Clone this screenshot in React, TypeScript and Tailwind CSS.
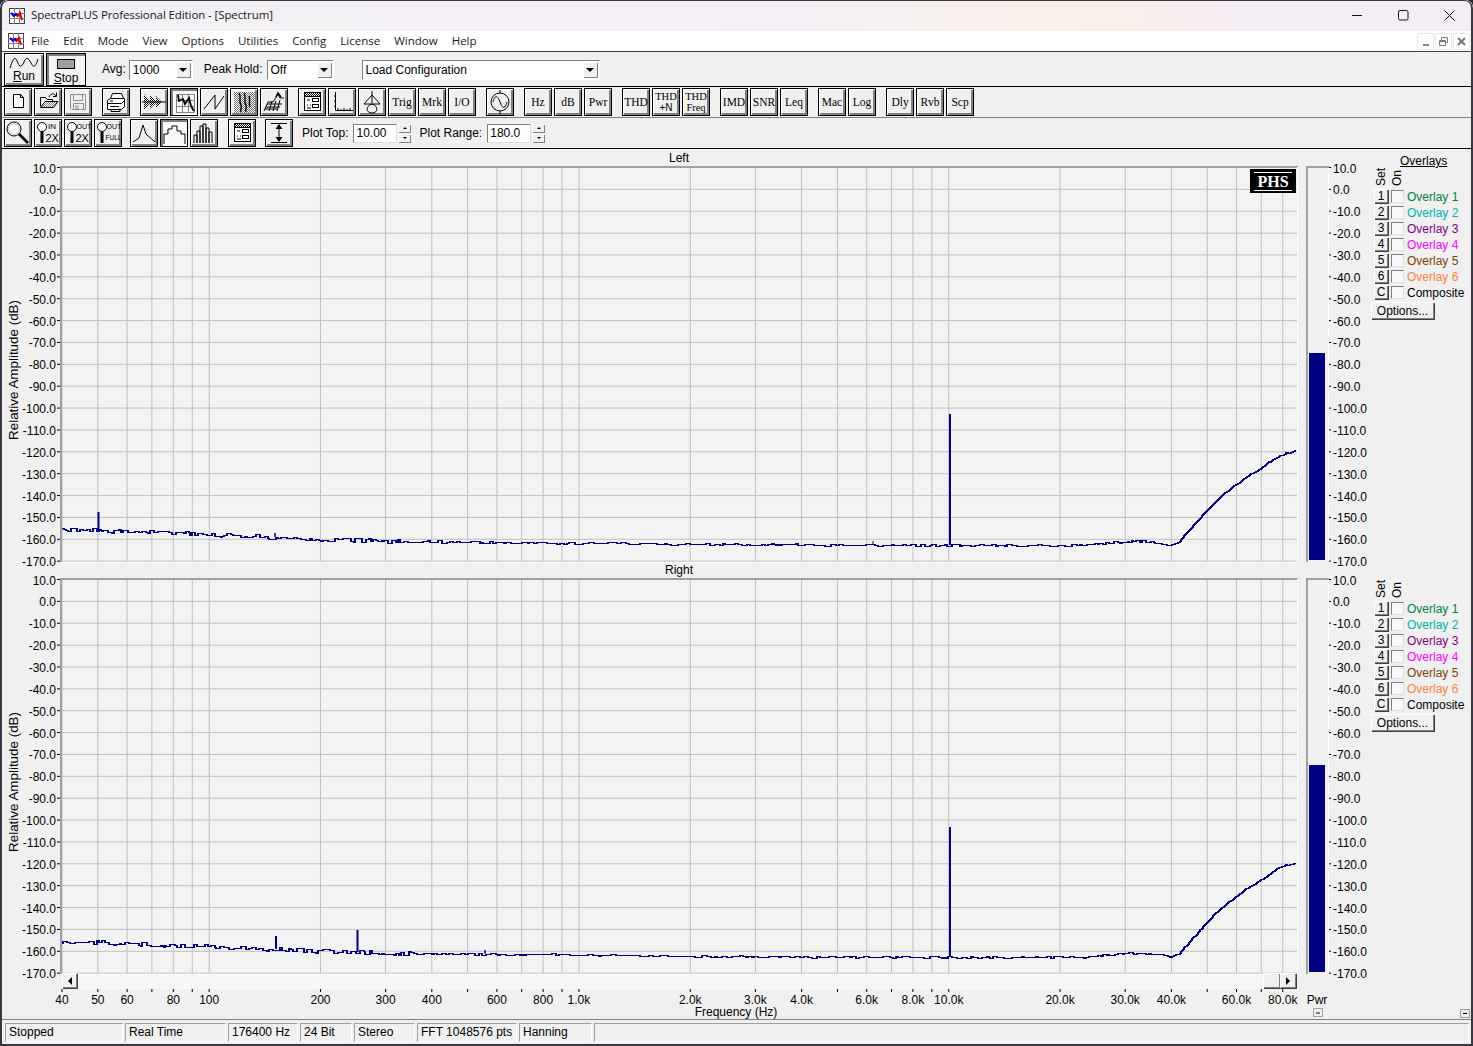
import type { ReactNode } from "react";

const FREQ_GRID = [
  40, 50, 60, 70, 80, 90, 100, 200, 300, 400, 500, 600, 700, 800, 900, 1000, 2000, 3000, 4000, 5000, 6000, 7000, 8000,
  9000, 10000, 20000, 30000, 40000, 50000, 60000, 70000, 80000,
];
const FREQ_LABELS: [number, string][] = [
  [40, "40"], [50, "50"], [60, "60"], [80, "80"], [100, "100"], [200, "200"], [300, "300"], [400, "400"],
  [600, "600"], [800, "800"], [1000, "1.0k"], [2000, "2.0k"], [3000, "3.0k"], [4000, "4.0k"], [6000, "6.0k"],
  [8000, "8.0k"], [10000, "10.0k"], [20000, "20.0k"], [30000, "30.0k"], [40000, "40.0k"], [60000, "60.0k"],
  [80000, "80.0k"],
];
const DB_LEVELS = Array.from({ length: 19 }, (_, i) => 10 - i * 10);

const freqX = (f: number) => 62 + 369.8 * Math.log10(f / 40);
const dbY = (db: number) => 167.5 + (10 - db) * 2.187;
const dbLabel = (db: number) => `${db}.0`;

// y of the noise floor (px, left plot coordinates) along the x axis
const FLOOR: [number, number][] = [
  [62, 529.5], [98, 530], [209, 534], [320, 539], [400, 541], [600, 543], [800, 544.5], [1000, 545], [1080, 545],
  [1100, 543.5], [1133, 540.5], [1150, 541.5], [1172, 544.5], [1180, 541.7], [1190, 530], [1200, 519], [1210, 508],
  [1220, 498], [1233, 487], [1247, 477], [1263, 467], [1277, 457], [1287, 453], [1296, 451],
];

function floorAt(x: number) {
  for (let i = 1; i < FLOOR.length; i++) {
    if (x <= FLOOR[i][0]) {
      const [x0, y0] = FLOOR[i - 1];
      const [x1, y1] = FLOOR[i];
      return y0 + ((y1 - y0) * (x - x0)) / (x1 - x0);
    }
  }
  return 451;
}

type Spike = { x: number; top: number; w: number };

function buildTrace(seed: number) {
  let s = seed;
  const rnd = () => {
    s = (s * 1664525 + 1013904223) % 4294967296;
    return s / 4294967296;
  };
  let d = "";
  let held = 0;
  let noise = 0;
  for (let x = 62; x <= 1296; x++) {
    if (held-- <= 0) {
      const amp = x < 420 ? 4.2 : x < 1172 ? 2.2 : 1.2;
      noise = (rnd() - 0.5) * amp;
      held = Math.floor(rnd() * 4) + 1;
    }
    const y = Math.round(floorAt(x) + noise) + 0.5;
    d += x === 62 ? `M${x} ${y}` : `V${y}H${x}`;
  }
  return d;
}

const LEFT_TRACE = buildTrace(11);
const RIGHT_TRACE = buildTrace(4242);
const LEFT_SPIKES: Spike[] = [
  { x: 98.5, top: 512, w: 2 },
  { x: 275, top: 533, w: 1.5 },
  { x: 873, top: 541, w: 1 },
  { x: 950, top: 414, w: 2 },
];
const RIGHT_SPIKES: Spike[] = [
  { x: 276, top: 524, w: 2 },
  { x: 357.5, top: 518, w: 2 },
  { x: 485, top: 538, w: 1.5 },
  { x: 950, top: 415, w: 2 },
];

function Plot({ trace, spikes, logo }: { trace: string; spikes: Spike[]; logo?: boolean }) {
  return (
    <svg width={1370} height={396} viewBox="0 166 1370 396" className="block overflow-visible">
      <rect x={62} y={168} width={1234} height={393} fill="#f3f3f3" />
      {FREQ_GRID.map((f) => (
        <line key={f} x1={freqX(f)} x2={freqX(f)} y1={168} y2={561} stroke="#c0c0c0" />
      ))}
      {DB_LEVELS.map((db) => (
        <g key={db}>
          <line x1={62} x2={1297} y1={dbY(db)} y2={dbY(db)} stroke="#c0c0c0" />
          <line x1={57} x2={61} y1={dbY(db)} y2={dbY(db)} stroke="#000" />
          <line x1={1329} x2={1331} y1={dbY(db)} y2={dbY(db)} stroke="#000" />
          <text x={56} y={dbY(db) + 5} textAnchor="end" fontSize={12}>
            {dbLabel(db)}
          </text>
          <text x={1333} y={dbY(db) + 5} fontSize={12}>
            {dbLabel(db)}
          </text>
        </g>
      ))}
      {/* sunken frame */}
      <path d="M61 562V167H1298" fill="none" stroke="#a0a0a0" strokeWidth={2} />
      <path d="M1297.5 167V562.5H62" fill="none" stroke="#fff" />
      <text transform="translate(18 370) rotate(-90)" textAnchor="middle" fontSize={13.4}>
        Relative Amplitude (dB)
      </text>
      {spikes.map((sp) => (
        <line key={sp.x} x1={sp.x} x2={sp.x} y1={sp.top} y2={floorAt(sp.x)} stroke="#000080" strokeWidth={sp.w} />
      ))}
      <path d={trace} fill="none" stroke="#000080" strokeWidth={1.6} shapeRendering="crispEdges" />
      {logo && (
        <g>
          <rect x={1250} y={169} width={46} height={24} fill="#000" />
          <line x1={1254} x2={1292} y1={172.5} y2={172.5} stroke="#fff" />
          <line x1={1254} x2={1292} y1={190.5} y2={190.5} stroke="#fff" />
          <text x={1273} y={187} textAnchor="middle" fontSize={16} fontWeight={700} fill="#fff" className="font-['Liberation_Serif']">
            PHS
          </text>
        </g>
      )}
      {/* level meter */}
      <rect x={1307} y={167} width={21} height={395} fill="#f0f0f0" />
      <path d="M1307 562V167H1329" fill="none" stroke="#a0a0a0" strokeWidth={2} />
      <path d="M1328.5 168V562" fill="none" stroke="#fff" />
      <rect x={1309} y={353} width={16} height={207} fill="#000080" />
    </svg>
  );
}

// stroke="none" here: pattern content inherits the icon svg's black stroke otherwise
function Dither({ id, dark = "#000" }: { id: string; dark?: string }) {
  return (
    <pattern id={id} width={2} height={2} patternUnits="userSpaceOnUse" stroke="none">
      <rect width={2} height={2} fill="#fff" />
      <rect width={1} height={1} fill={dark} />
      <rect x={1} y={1} width={1} height={1} fill={dark} />
    </pattern>
  );
}

function AppIcon() {
  return (
    <svg width={16} height={16} viewBox="0 0 16 16" className="shrink-0">
      <rect x={0.5} y={0.5} width={15} height={15} fill="#fff" stroke="#404040" />
      <path d="M0 5.5H16M0 10.5H16M5.5 0V16M10.5 0V16" stroke="#808080" />
      <path d="M2 5L5 8L7 6L9 8" fill="none" stroke="#0000e0" strokeWidth={2} />
      <path d="M8 9L11 5L13 12" fill="none" stroke="#e00000" strokeWidth={2} />
    </svg>
  );
}

type BtnProps = { children: ReactNode; pressed?: boolean; className?: string };

function Btn({ children, pressed, className = "" }: BtnProps) {
  const look = pressed
    ? "bg-[#f8f8f8] shadow-[inset_2px_2px_0_#808080]"
    : "bg-[#f0f0f0] shadow-[inset_1px_1px_0_#fff,inset_-2px_-2px_0_#808080]";
  return (
    <div className={`flex h-[28px] w-[28px] shrink-0 items-center justify-center border border-black ${look} ${className}`}>
      {children}
    </div>
  );
}

function Ico({ children, pressed }: { children: ReactNode; pressed?: boolean }) {
  return (
    <Btn pressed={pressed}>
      <svg width={26} height={26} viewBox="0 0 26 26" fill="none" stroke="#000">
        {children}
      </svg>
    </Btn>
  );
}

function TextBtn({ label, sub }: { label: string; sub?: string }) {
  if (sub) {
    return (
      <Btn>
        <div className="flex flex-col items-center font-['Liberation_Serif'] text-[10.5px] leading-[11px] text-black">
          <span>{label}</span>
          <span className={sub === "+N" ? "font-['Liberation_Sans'] text-[10px]" : ""}>{sub}</span>
        </div>
      </Btn>
    );
  }
  return (
    <Btn>
      <span className="whitespace-nowrap pt-[1px] font-['Liberation_Serif'] text-[11.5px] text-black">{label}</span>
    </Btn>
  );
}

function ListIcon({ id }: { id: string }) {
  return (
    <Ico>
      <Dither id={id} />
      <rect x={5.5} y={3.5} width={16} height={18} fill="#fff" />
      <rect x={6} y={4} width={15} height={3} fill={`url(#${id})`} stroke="none" />
      <path d="M5.5 7.5H21.5" />
      <rect x={13.5} y={9.5} width={6} height={3} />
      <rect x={13.5} y={15.5} width={6} height={3} />
      <path d="M8 11H11M8 16H9M11 16H12M8 19H12" />
    </Ico>
  );
}

function ZoomIcon({ top, bottom }: { top: string; bottom: string }) {
  return (
    <Ico>
      <circle cx={7} cy={7} r={4.5} fill="#fff" />
      <path d="M7 11.5V23" strokeWidth={3} />
      <text x={top === "IN" ? 13 : 11.5} y={9} fontSize={top === "IN" ? 8 : 7} stroke="none" fill="#000">
        {top}
      </text>
      <text x={10.5} y={bottom === "FULL" ? 20 : 22} fontSize={bottom === "FULL" ? 6.5 : 11} stroke="none" fill="#000">
        {bottom}
      </text>
    </Ico>
  );
}

function ToolbarRow2() {
  return (
    <div className="flex h-[31px] items-start gap-[2px] border-b border-[#808080] pl-[4px] pt-[1px]">
      <Ico>
        <path d="M8.5 5.5H15.5L18.5 8.5V18.5H8.5Z" fill="#fff" />
        <path d="M15.5 5.5V8.5H18.5" />
      </Ico>
      <Ico>
        <Dither id="df" dark="#808080" />
        <path d="M5.5 17.5V8.5H10.5L12 10.5H17.5V12.5" fill="#fff" />
        <path d="M5.5 18.5L10 12.5H23L18.5 18.5Z" fill="url(#df)" />
        <path d="M14 8C16 4 19 4 21 7M21.5 3.5V7.5H18" />
      </Ico>
      <Ico>
        <g stroke="#909090">
          <path d="M5.5 5.5H20.5V20.5H7L5.5 19Z" />
          <path d="M8.5 5.5V11.5H17.5V5.5M8.5 20.5V14.5H18.5V20.5M11 16V20H13V16" />
        </g>
      </Ico>
      <div className="ml-[8px]">
        <Ico>
          <path d="M9.5 4.5H18.5L20.5 9.5H7.5Z" fill="#fff" />
          <path d="M4.5 11.5L7.5 9.5H21.5V17.5L18.5 20.5H4.5Z" fill="#fff" />
          <path d="M4.5 14.5H18.5L21.5 11.5M7 17.5H16M7 12H10" />
          <path d="M8 20.5V22.5H17V20.5" />
        </Ico>
      </div>
      <div className="ml-[8px] flex gap-[2px]">
        <Ico>
          <Dither id="ds" />
          <path d="M3 5V21L10 13ZM9 6V20L16 13ZM15 7V19L21 13Z" fill="url(#ds)" stroke="none" />
          <path d="M1 13H25" />
        </Ico>
        <Ico pressed>
          <path d="M5.5 5.5H23.5V23.5H5.5ZM11.5 5.5V23.5M17.5 5.5V23.5M5.5 11.5H23.5M5.5 17.5H23.5" stroke="#808080" />
          <path d="M7 6L8 12L12 10L14 15L18 9L20 17L23 22" strokeWidth={1.8} />
        </Ico>
        <Ico>
          <path d="M3 20L14 6V20L23 7" />
        </Ico>
        <Ico>
          <Dither id="dg" dark="#707070" />
          <rect x={3} y={3} width={21} height={21} fill="url(#dg)" stroke="none" />
          <path d="M8 4C11 8 7 12 10 16C11 18 9 21 10 23M13 4C16 8 12 12 15 16C16 18 14 21 15 23M18 7C20 11 17 14 19 18" strokeWidth={1.4} />
        </Ico>
        <Ico>
          <path d="M3 22L7 13H12L14 10L17 5L19 9H23M5 18H19M6 15H21M4 20H17M8 22L11 12M12 22L15 12M16 22L19 11" />
          <path d="M15 8L17 4L20 8" strokeWidth={1.6} />
        </Ico>
      </div>
      <div className="ml-[8px] flex gap-[2px]">
        <ListIcon id="dl1" />
        <Ico>
          <path d="M6.5 3V21.5H24M9 19V21M12 20V21M15 19V21M18 20V21M21 19V21M5 7H6M5 12H6M5 17H6" />
        </Ico>
        <Ico>
          <path d="M13 2V14M13 6L5 15H21L13 6" />
          <path d="M13 15C6 17 7 24 13 24C19 24 20 17 13 15Z" />
        </Ico>
        <TextBtn label="Trig" />
        <TextBtn label="Mrk" />
        <TextBtn label="I/O" />
      </div>
      <div className="ml-[8px]">
        <Ico>
          <circle cx={13} cy={13} r={9} />
          <path d="M13 1V4M13 22V25" />
          <path d="M6 13C8 5 11 7 13 13C15 19 18 21 20 13" />
        </Ico>
      </div>
      <div className="ml-[8px] flex gap-[2px]">
        <TextBtn label="Hz" />
        <TextBtn label="dB" />
        <TextBtn label="Pwr" />
      </div>
      <div className="ml-[8px] flex gap-[2px]">
        <TextBtn label="THD" />
        <TextBtn label="THD" sub="+N" />
        <TextBtn label="THD" sub="Freq" />
      </div>
      <div className="ml-[8px] flex gap-[2px]">
        <TextBtn label="IMD" />
        <TextBtn label="SNR" />
        <TextBtn label="Leq" />
      </div>
      <div className="ml-[8px] flex gap-[2px]">
        <TextBtn label="Mac" />
        <TextBtn label="Log" />
      </div>
      <div className="ml-[8px] flex gap-[2px]">
        <TextBtn label="Dly" />
        <TextBtn label="Rvb" />
        <TextBtn label="Scp" />
      </div>
    </div>
  );
}

function NumberField({ value }: { value: string }) {
  return (
    <div className="flex items-center gap-[1px]">
      <div className="flex h-[19px] w-[44px] items-center border border-[#808080] border-b-[#e0e0e0] border-r-[#e0e0e0] bg-white pl-[2px]">
        {value}
      </div>
      <div className="flex h-[19px] w-[13px] flex-col gap-[1px]">
        <div className="flex h-[9px] items-center justify-center bg-[#f0f0f0] shadow-[inset_1px_1px_0_#fff,inset_-1px_-1px_0_#808080]">
          <div className="h-0 w-0 border-x-[2px] border-b-[2px] border-x-transparent border-b-black" />
        </div>
        <div className="flex h-[9px] items-center justify-center bg-[#f0f0f0] shadow-[inset_1px_1px_0_#fff,inset_-1px_-1px_0_#808080]">
          <div className="h-0 w-0 border-x-[2px] border-t-[2px] border-x-transparent border-t-black" />
        </div>
      </div>
    </div>
  );
}

function ToolbarRow3() {
  return (
    <div className="flex h-[31px] items-start border-b border-black pl-[4px] pt-[1px]">
      <div className="flex gap-[2px]">
        <Ico>
          <circle cx={9} cy={9} r={7} fill="#fff" />
          <circle cx={9} cy={9} r={5.2} stroke="#c0c0c0" />
          <path d="M14 14L23 23" strokeWidth={2.6} />
        </Ico>
        <ZoomIcon top="IN" bottom="2X" />
        <ZoomIcon top="OUT" bottom="2X" />
        <ZoomIcon top="OUT" bottom="FULL" />
      </div>
      <div className="ml-[8px] flex gap-[2px]">
        <Ico>
          <path d="M2 22L8 18L12 5L15 14L24 22" />
          <path d="M1 23H25" stroke="#fff" />
        </Ico>
        <Ico pressed>
          <path d="M3 24V14H7V9H11V6H16V11H20V14H24V24" />
        </Ico>
        <Ico>
          <path d="M3 23V15H6V23M6 23V11H9V23M9 23V6H12V23M12 23V4H15V23M15 23V8H18V23M18 23V12H21V23" />
        </Ico>
      </div>
      <div className="ml-[10px]">
        <ListIcon id="dl2" />
      </div>
      <div className="ml-[9px]">
        <Ico>
          <path d="M5 3.5H21M5 22.5H21M13 5V21" />
          <path d="M13 4L9.5 9H16.5ZM13 22L9.5 17H16.5Z" fill="#000" stroke="none" />
        </Ico>
      </div>
      <div className="flex h-[28px] items-center text-[12px]">
        <span className="ml-[9px] mr-[5px]">Plot Top:</span>
        <NumberField value="10.00" />
        <span className="ml-[8px] mr-[5px]">Plot Range:</span>
        <NumberField value="180.0" />
      </div>
    </div>
  );
}

function Combo({ text, width }: { text: string; width: string }) {
  return (
    <div className={`mt-[2px] flex h-[20px] items-center justify-between border border-[#808080] border-b-white border-r-white bg-white pl-[3px] ${width}`}>
      <span>{text}</span>
      <div className="mr-[1px] flex h-[16px] w-[15px] items-center justify-center bg-[#f0f0f0] shadow-[inset_1px_1px_0_#fff,inset_-1px_-1px_0_#808080]">
        <div className="h-0 w-0 border-x-[4px] border-t-[4px] border-x-transparent border-t-black" />
      </div>
    </div>
  );
}

function ToolbarRow1() {
  return (
    <div className="flex h-[36px] items-center border-y border-y-[#404040] border-b-black pl-[4px] text-[12px]">
      <div className="flex h-[33px] w-[40px] flex-col items-center border border-black bg-[#f0f0f0] shadow-[inset_1px_1px_0_#fff,inset_-2px_-2px_0_#808080]">
        <svg width={32} height={16} viewBox="0 0 32 16" fill="none" stroke="#000" className="mt-[1px]">
          <path d="M2 13C5 3 7 1 9 6C11 11 13 14 16 7C18 2 20 2 23 8C25 12 27 14 30 4" />
        </svg>
        <span className="mt-[-1px] leading-[13px]">
          <span className="underline">R</span>un
        </span>
      </div>
      <div className="ml-[2px] flex h-[33px] w-[40px] flex-col items-center border border-black bg-[#f4f4f4] shadow-[inset_2px_2px_0_#808080]">
        <div className="mt-[5px] h-[10px] w-[18px] border border-black bg-[#a0a0a0]" />
        <span className="mt-[3px] leading-[13px]">
          <span className="underline">S</span>top
        </span>
      </div>
      <span className="ml-[16px] mr-[3px]">Avg:</span>
      <Combo text="1000" width="w-[64px]" />
      <span className="ml-[11px] mr-[4px]">Peak Hold:</span>
      <Combo text="Off" width="w-[67px]" />
      <div className="ml-[28px]">
        <Combo text="Load Configuration" width="w-[238px]" />
      </div>
    </div>
  );
}

const OVERLAYS: [string, string][] = [
  ["1", "text-[#008040]"],
  ["2", "text-[#00b0b0]"],
  ["3", "text-[#800080]"],
  ["4", "text-[#ff00ff]"],
  ["5", "text-[#804000]"],
  ["6", "text-[#ff8040]"],
  ["C", "text-black"],
];

function SmallRaised({ className, children }: { className: string; children?: ReactNode }) {
  return (
    <div className={`flex items-center justify-center bg-[#f0f0f0] shadow-[inset_1px_1px_0_#fff,inset_-1px_-1px_0_#808080,1px_1px_0_#404040] ${className}`}>
      {children}
    </div>
  );
}

function OverlayPanel({ heading }: { heading?: boolean }) {
  return (
    <div className="flex h-[412px] flex-col">
      <div className="h-[18px] pl-[30px] pt-[4px] leading-[14px] underline">{heading ? "Overlays" : ""}</div>
      <div className="flex h-[21px] items-end pb-[3px] pl-[4px] leading-[14px]">
        <span className="w-[16px] rotate-180 [writing-mode:vertical-rl]">Set</span>
        <span className="w-[14px] rotate-180 [writing-mode:vertical-rl]">On</span>
      </div>
      {OVERLAYS.map(([key, color]) => (
        <div key={key} className="flex h-[16px] items-center pl-[4px]">
          <SmallRaised className="mb-[2px] h-[14px] w-[14px]">{key}</SmallRaised>
          <div className="mb-[2px] ml-[3px] h-[13px] w-[13px] border border-[#808080] border-b-[#e0e0e0] border-r-[#e0e0e0] bg-[#f8f8f8]" />
          <span className={`ml-[3px] ${color}`}>{key === "C" ? "Composite" : `Overlay ${key}`}</span>
        </div>
      ))}
      <SmallRaised className="ml-[1px] mt-[1px] h-[17px] w-[63px]">Options...</SmallRaised>
    </div>
  );
}

function Scrollbar() {
  return (
    <div className="ml-[62px] flex h-[16px] w-[1234px] -mt-[1px] bg-[repeating-conic-gradient(#ffffff_0_25%,#eeeeee_0_50%)] [background-size:2px_2px]">
      <SmallRaised className="h-[15px] w-[15px]">
        <div className="h-0 w-0 border-y-[4px] border-r-[4px] border-y-transparent border-r-black" />
      </SmallRaised>
      <div className="flex-1" />
      <SmallRaised className="h-[15px] w-[17px]" />
      <SmallRaised className="h-[15px] w-[16px]">
        <div className="h-0 w-0 border-y-[4px] border-l-[4px] border-y-transparent border-l-black" />
      </SmallRaised>
    </div>
  );
}

function FreqAxis() {
  return (
    <svg width={1370} height={30} viewBox="0 989 1370 30" className="block">
      {FREQ_GRID.map((f) => (
        <line key={f} x1={freqX(f)} x2={freqX(f)} y1={989} y2={992} stroke="#000" />
      ))}
      {FREQ_LABELS.map(([f, label]) => (
        <text key={f} x={freqX(f)} y={1004} textAnchor="middle" fontSize={12}>
          {label}
        </text>
      ))}
      <text x={736} y={1016} textAnchor="middle" fontSize={12}>
        Frequency (Hz)
      </text>
      <text x={1317} y={1004} textAnchor="middle" fontSize={12}>
        Pwr
      </text>
      <rect x={1313.5} y={1008.5} width={9} height={8} fill="#f0f0f0" stroke="#a0a0a0" />
      <path d="M1316 1013H1320" stroke="#000" />
    </svg>
  );
}

function TitleBar() {
  return (
    <div className="flex h-[31px] items-center bg-[linear-gradient(90deg,#f3f1f5_0%,#f4eff4_55%,#fbf0e8_72%,#f9eee8_76%,#f6ecf5_85%,#f6ecf5_100%)] pl-[9px] font-['Open_Sans'] text-[11.5px] tracking-[-0.1px]">
      <AppIcon />
      <span className="mb-[2px] ml-[6px] text-[#1a1a1a]">SpectraPLUS Professional Edition - [Spectrum]</span>
      <div className="ml-auto flex items-center pr-[18px]">
        <svg width={11} height={11} viewBox="0 0 11 11" fill="none" stroke="#111">
          <path d="M0 5.5H10" />
        </svg>
        <svg width={11} height={11} viewBox="0 0 11 11" fill="none" stroke="#111" className="ml-[35px]">
          <rect x={0.5} y={0.5} width={9.5} height={9.5} rx={1.5} />
        </svg>
        <svg width={11} height={11} viewBox="0 0 11 11" fill="none" stroke="#111" className="ml-[35px]">
          <path d="M0.5 0.5L10.5 10.5M10.5 0.5L0.5 10.5" />
        </svg>
      </div>
    </div>
  );
}

const MENUS = ["File", "Edit", "Mode", "View", "Options", "Utilities", "Config", "License", "Window", "Help"];

function MenuBar() {
  return (
    <div className="flex h-[20px] items-center bg-white pl-[8px] font-['Open_Sans'] text-[11.5px] text-[#1a1a1a]">
      <AppIcon />
      <div className="ml-[7px] flex gap-[14px]">
        {MENUS.map((m) => (
          <span key={m}>{m}</span>
        ))}
      </div>
      <div className="ml-auto flex gap-[1px] pr-[3px]">
        <div className="flex h-[17px] w-[17px] items-end justify-center rounded-[2px] border border-[#e8e8e8] pb-[3px]">
          <div className="h-[2px] w-[6px] bg-[#808890]" />
        </div>
        <div className="flex h-[17px] w-[17px] items-center justify-center rounded-[2px] border border-[#e8e8e8]">
          <svg width={9} height={9} viewBox="0 0 9 9" fill="none" stroke="#707880">
            <path d="M0.5 3.5H6.5V8.5H0.5ZM2.5 3V0.5H8.5V5.5H7M0.5 4.5H6.5" />
          </svg>
        </div>
        <div className="flex h-[17px] w-[17px] items-center justify-center rounded-[2px] border border-[#e8e8e8]">
          <svg width={9} height={9} viewBox="0 0 9 9" fill="none" stroke="#707880" strokeWidth={2}>
            <path d="M1 1L8 8M8 1L1 8" />
          </svg>
        </div>
      </div>
    </div>
  );
}

const STATUS: [string, string][] = [
  ["Stopped", "w-[118px]"],
  ["Real Time", "w-[101px]"],
  ["176400 Hz", "w-[70px]"],
  ["24 Bit", "w-[52px]"],
  ["Stereo", "w-[61px]"],
  ["FFT 1048576 pts", "w-[100px]"],
  ["Hanning", "w-[73px]"],
];

function StatusBar() {
  return (
    <div className="relative flex h-[27px] gap-[2px] border-t border-[#808080] pl-[5px] pr-[4px] pt-[3px] text-[12px]">
      {STATUS.map(([label, w]) => (
        <div key={label} className={`flex h-[19px] items-center whitespace-nowrap border border-[#a0a0a0] border-b-white border-r-white pb-[2px] pl-[3px] ${w}`}>
          {label}
        </div>
      ))}
      <div className="h-[19px] flex-1 border border-[#a0a0a0] border-b-white border-r-white" />
      <div className="absolute -top-[11px] right-[3px] flex h-[9px] w-[10px] items-center justify-center border border-[#a0a0a0] bg-[#f0f0f0]">
        <div className="h-[1px] w-[4px] bg-black" />
      </div>
    </div>
  );
}

export default function App() {
  return (
    <div className="h-[1046px] w-[1473px] bg-[#2a2630]">
      <div className="relative flex h-full flex-col overflow-hidden rounded-t-[8px] bg-[#f0f0f0] font-['Liberation_Sans',sans-serif] text-[12px] text-black">
        <TitleBar />
        <MenuBar />
        <ToolbarRow1 />
        <ToolbarRow2 />
        <ToolbarRow3 />
        <div className="flex h-[870px] pt-[1px]">
          <div className="w-[1370px]">
            <div className="h-[16px] w-[1234px] translate-x-[62px] text-center leading-[16px]">Left</div>
            <Plot trace={LEFT_TRACE} spikes={LEFT_SPIKES} logo />
            <div className="h-[16px] w-[1234px] translate-x-[62px] text-center leading-[16px]">Right</div>
            <Plot trace={RIGHT_TRACE} spikes={RIGHT_SPIKES} />
            <Scrollbar />
            <FreqAxis />
          </div>
          <div className="flex-1">
            <OverlayPanel heading />
            <OverlayPanel />
          </div>
        </div>
        <StatusBar />
        <div className="pointer-events-none absolute inset-0 rounded-t-[8px] border-x-2 border-b-2 border-t border-[#3a3640]" />
      </div>
    </div>
  );
}
